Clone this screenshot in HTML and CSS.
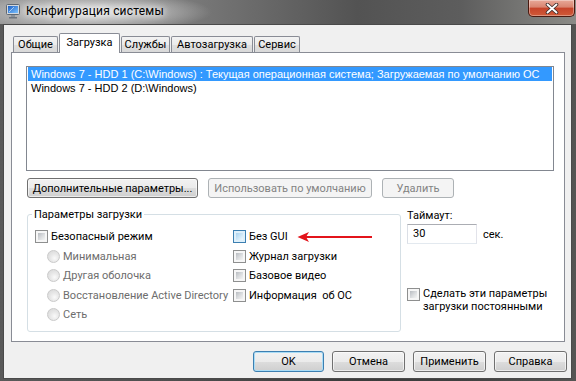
FILE: index.html
```html
<!DOCTYPE html>
<html lang="ru">
<head>
    <meta charset="UTF-8">
    <title>Конфигурация системы</title>
    <link rel="stylesheet" href="styles.css">
</head>
<body>
    <div class="window">
        <div class="titlebar">
            <svg class="app-icon" width="16" height="16" viewBox="0 0 16 16">
                <defs>
                    <linearGradient id="scr" x1="0" y1="0" x2="1" y2="1">
                        <stop offset="0" stop-color="#1d5fc4"/>
                        <stop offset="1" stop-color="#7cc3ff"/>
                    </linearGradient>
                </defs>
                <rect x="0.5" y="1.5" width="13" height="10" rx="1" fill="#d4d8dd" stroke="#5f6872"/>
                <rect x="2" y="3" width="10" height="7" fill="url(#scr)"/>
                <path d="M3 9 L8 4" stroke="#cfe8ff" stroke-width="1" opacity=".7"/>
                <rect x="5" y="12" width="4" height="2" fill="#8a929b"/>
                <rect x="3" y="14" width="8" height="1.5" fill="#6d757e"/>
            </svg>
            <span class="title">Конфигурация системы</span>
            <div class="close">
                <svg width="14" height="11" viewBox="0 0 14 11">
                    <path d="M2.5 1.5 L11.5 9.5 M11.5 1.5 L2.5 9.5" stroke="#3a2a28" stroke-width="3.6" stroke-linecap="round"/>
                    <path d="M2.5 1.5 L11.5 9.5 M11.5 1.5 L2.5 9.5" stroke="#fff" stroke-width="1.9" stroke-linecap="round"/>
                </svg>
            </div>
        </div>

        <div class="client">
            <div class="tabs">
                <div class="tab w1">Общие</div>
                <div class="tab active w2">Загрузка</div>
                <div class="tab w3">Службы</div>
                <div class="tab w4">Автозагрузка</div>
                <div class="tab w5">Сервис</div>
            </div>

            <div class="panel">
                <div class="oslist">
                    <div class="os selected">Windows 7 - HDD 1 (C:\Windows) : Текущая операционная система; Загружаемая по умолчанию ОС</div>
                    <div class="os">Windows 7 - HDD 2 (D:\Windows)</div>
                </div>

                <div class="os-buttons">
                    <button type="button" class="btn adv">Дополнительные параметры...</button>
                    <button type="button" class="btn def" disabled>Использовать по умолчанию</button>
                    <button type="button" class="btn del" disabled>Удалить</button>
                </div>

                <div class="options">
                    <fieldset class="boot-group">
                        <legend>Параметры загрузки</legend>
                        <div class="cols">
                            <div class="col first">
                                <div class="opt"><span class="cb"></span>Безопасный режим</div>
                                <div class="opt sub off"><span class="rb"></span>Минимальная</div>
                                <div class="opt sub off"><span class="rb"></span>Другая оболочка</div>
                                <div class="opt sub off"><span class="rb"></span>Восстановление Active Directory</div>
                                <div class="opt sub off"><span class="rb"></span>Сеть</div>
                            </div>
                            <div class="col">
                                <div class="opt marked">
                                    <span class="cb hot"></span>Без GUI
                                    <svg class="arrow" width="76" height="12" viewBox="0 0 76 12">
                                        <path d="M8 6 H75" stroke="#e3141b" stroke-width="2"/>
                                        <path d="M0.5 6 L12 1 L9 6 L12 11 Z" fill="#e3141b"/>
                                    </svg>
                                </div>
                                <div class="opt"><span class="cb"></span>Журнал загрузки</div>
                                <div class="opt"><span class="cb"></span>Базовое видео</div>
                                <div class="opt"><span class="cb"></span>Информация&nbsp; об ОС</div>
                            </div>
                        </div>
                    </fieldset>

                    <div class="side">
                        <div class="timeout-label">Таймаут:</div>
                        <div class="timeout-row">
                            <span class="field">30</span>
                            <span class="unit">сек.</span>
                        </div>
                        <div class="perm">
                            <span class="cb"></span>
                            <span>Сделать эти параметры<br>загрузки постоянными</span>
                        </div>
                    </div>
                </div>
            </div>

            <div class="footer">
                <button type="button" class="btn dlg ok">OK</button>
                <button type="button" class="btn dlg">Отмена</button>
                <button type="button" class="btn dlg">Применить</button>
                <button type="button" class="btn dlg">Справка</button>
            </div>
        </div>
    </div>
</body>
</html>
```

FILE: styles.css
```css
*{
    margin: 0;
    padding: 0;
    box-sizing: border-box;
}
body{
    width: 576px;
    height: 381px;
    overflow: hidden;
    font-family: Roboto, "Liberation Sans", sans-serif;
    font-size: 11px;
    color: #000;
}
.window{
    width: 576px;
    height: 381px;
    display: flex;
    flex-direction: column;
    padding: 0 4px 2px 3px;
    background:
        linear-gradient(180deg, rgba(40,40,40,0) 24px, rgba(40,40,40,.55) 24px),
        radial-gradient(ellipse 120px 20px at 92px 12px, rgba(236,236,236,.95), rgba(236,236,236,0)),
        linear-gradient(90deg, #959595 0%, #7d7d7d 30%, #535353 62%, #5d5d5d 80%, #8b8b87 100%);
}

/* title bar */
.titlebar{
    height: 24px;
    display: flex;
    align-items: flex-start;
    margin-right: -4px;
}
.app-icon{
    margin: 3px 0 0 3px;
    flex: none;
}
.title{
    margin-left: 4px;
    font-size: 12px;
    letter-spacing: .2px;
    line-height: 23px;
    color: #000;
    text-shadow: 0 0 6px #fff, 0 0 10px #fff;
}
.close{
    margin-left: auto;
    margin-right: 1px;
    width: 47px;
    height: 17px;
    border: 1px solid #4a1a10;
    border-top: 0;
    border-radius: 0 0 5px 5px;
    background: linear-gradient(#e8a898 0%, #d98470 45%, #c6432a 50%, #cf5a38 100%);
    box-shadow: inset 0 0 0 1px rgba(255,255,255,.35);
    display: flex;
    align-items: center;
    justify-content: center;
}

/* client */
.client{
    flex: 1;
    display: flex;
    flex-direction: column;
    background: #f0f0f0;
    border: 1px solid #4a4a4a;
    padding: 8px 3px 6px 7px;
}
.tabs{
    display: flex;
    align-items: flex-end;
    gap: 1px;
    height: 19px;
    padding-left: 2px;
    position: relative;
    z-index: 1;
}
.tab{
    height: 16px;
    border: 1px solid #898c95;
    border-bottom: 0;
    border-radius: 2px 2px 0 0;
    background: linear-gradient(#f3f3f3, #ebebeb 50%, #dfdfdf 51%, #d9d9d9);
    display: flex;
    align-items: center;
    justify-content: center;
    white-space: nowrap;
}
.tab.active{
    height: 20px;
    margin-bottom: -1px;
    background: #fff;
    padding-bottom: 2px;
}
.w1{ width: 45px; }
.w2{ width: 61px; }
.w3{ width: 49px; }
.w4{ width: 82px; }
.w5{ width: 46px; }

.panel{
    height: 290px;
    margin-right: 3px;
    background: #fff;
    border: 1px solid #898c95;
    padding: 13px 10px 0 14px;
}
.oslist{
    height: 105px;
    border: 1px solid #828790;
    padding: 0 1px;
}
.os{
    height: 14px;
    line-height: 14px;
    padding-left: 3px;
    font-family: "Liberation Sans", Arial, sans-serif;
    font-size: 11px;
    white-space: nowrap;
}
.os.selected{
    background: #3399ff;
    color: #fff;
}

/* buttons */
.btn{
    height: 20px;
    font: inherit;
    color: #000;
    border: 1px solid #707070;
    border-radius: 3px;
    background: linear-gradient(#f2f2f2 0%, #ebebeb 50%, #dddddd 51%, #cfcfcf 100%);
    box-shadow: inset 0 0 0 1px rgba(255,255,255,.6);
    white-space: nowrap;
}
.btn:disabled{
    color: #838383;
    border-color: #adb2b5;
    background: #f4f4f4;
    box-shadow: none;
}
.os-buttons{
    display: flex;
    gap: 10px;
    margin-top: 7px;
    padding-left: 1px;
}
.adv{ width: 171px; }
.def{ width: 164px; }
.del{ width: 72px; }

/* boot options */
.options{
    display: flex;
    gap: 6px;
    margin-top: 9px;
    padding-left: 1px;
}
.boot-group{
    flex: none;
    width: 374px;
    height: 125px;
    border: 1px solid #d5dfe5;
    border-radius: 3px;
    padding: 0;
    margin: 0;
    min-width: 0;
}
.boot-group legend{
    margin-left: 4px;
    padding: 0 2px;
    line-height: 15px;
}
.cols{
    display: flex;
    padding: 5px 0 0 7px;
}
.col.first{
    width: 198px;
}
.opt{
    height: 19.5px;
    display: flex;
    align-items: center;
    white-space: nowrap;
}
.opt.sub{
    padding-left: 12px;
}
.opt.off{
    color: #6d6d6d;
}
.marked{
    position: relative;
}
.arrow{
    position: absolute;
    left: 64px;
    top: 4px;
}
.cb{
    flex: none;
    width: 13px;
    height: 13px;
    margin-right: 3px;
    border: 1px solid #8e8f8f;
    background: #f6f6f6;
    padding: 2px;
}
.cb::before{
    content: "";
    display: block;
    width: 7px;
    height: 7px;
    background: linear-gradient(135deg, #b8bcc1 0%, #dcdee0 55%, #f4f4f4 100%);
}
.cb.hot{
    border-color: #3c7fb1;
    background: #def0fb;
}
.cb.hot::before{
    background: linear-gradient(135deg, #a9d3f0 0%, #cfe8f8 55%, #eef8fe 100%);
}
.rb{
    flex: none;
    width: 13px;
    height: 13px;
    margin-right: 3px;
    border-radius: 50%;
    border: 1px solid #cacaca;
    background: radial-gradient(circle at 60% 65%, #fafafa 0, #e7e7e7 45%, #d6d6d6 100%);
}

/* timeout side */
.side{
    flex: 1;
    min-width: 0;
}
.timeout-label{
    line-height: 17px;
}
.timeout-row{
    display: flex;
    align-items: center;
}
.field{
    width: 70px;
    height: 20px;
    line-height: 18px;
    padding-left: 5px;
    background: #fff;
    border: 1px solid #e2e3ea;
    border-top-color: #abadb3;
    border-left-color: #dbdfe6;
    border-bottom-color: #e3e9ef;
}
.unit{
    margin-left: 6px;
}
.perm{
    display: flex;
    align-items: flex-start;
    margin-top: 43px;
    line-height: 13px;
    white-space: nowrap;
}
.perm .cb{
    margin-top: 1px;
}

/* dialog buttons */
.footer{
    display: flex;
    justify-content: flex-end;
    gap: 8px;
    margin-top: 9px;
    margin-right: 1px;
}
.btn.dlg{
    width: 73px;
    height: 21px;
}
.btn.ok{
    width: 71px;
    border-color: #3c7fb1;
    box-shadow: inset 0 0 0 1px #a9dcf6;
}
```
